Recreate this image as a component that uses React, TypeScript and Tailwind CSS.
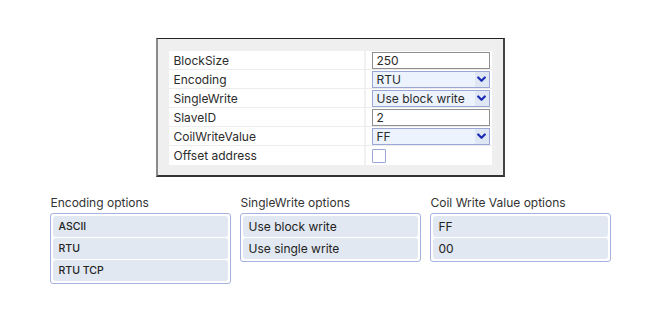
import React from 'react';

type Field =
  | { label: string; kind: 'text'; value: string }
  | { label: string; kind: 'select'; value: string }
  | { label: string; kind: 'check' };

const FIELDS: Field[] = [
  { label: 'BlockSize', kind: 'text', value: '250' },
  { label: 'Encoding', kind: 'select', value: 'RTU' },
  { label: 'SingleWrite', kind: 'select', value: 'Use block write' },
  { label: 'SlaveID', kind: 'text', value: '2' },
  { label: 'CoilWriteValue', kind: 'select', value: 'FF' },
  { label: 'Offset address', kind: 'check' },
];

const Chevron = () => (
  <svg width="9" height="7" viewBox="0 0 9 7" className="text-[#1b2bb5]">
    <path d="M1.2 1.5 L4.5 4.8 L7.8 1.5" fill="none" stroke="currentColor" strokeWidth="2.2" strokeLinecap="round" strokeLinejoin="round" />
  </svg>
);

const FieldInput: React.FC<{ field: Field }> = ({ field }) => {
  if (field.kind === 'text') {
    return (
      <div className="h-[17px] w-[118px] border border-[#8f8f8f] bg-white px-[4px] flex items-center leading-[15px]">
        {field.value}
      </div>
    );
  }
  if (field.kind === 'select') {
    return (
      <div className="h-[17px] w-[118px] border border-[#9aa6d6] bg-[#edf3fc] flex items-center leading-[15px]">
        <span className="flex-1 pl-[4px] whitespace-nowrap">{field.value}</span>
        <span className="h-full w-[14px] bg-[#dfe7f5] flex items-center justify-center">
          <Chevron />
        </span>
      </div>
    );
  }
  return <div className="h-[14px] w-[14px] border border-[#9aa6d6] bg-white rounded-[1px]" />;
};

const OptionBox: React.FC<{ title: string; items: string[]; small?: boolean }> = ({ title, items, small }) => (
  <div className="w-[181px]">
    <div className="text-[12px] text-[#333] leading-none h-[16px] pl-[1px]">{title}</div>
    <div className="border border-[#a6b2df] rounded-[3px] p-[2px] flex flex-col gap-[1px] bg-white">
      {items.map((it) => (
        <div
          key={it}
          className={`h-[21px] rounded-[3px] bg-[#e1e8f1] flex items-center pl-[6px] text-[#222] ${
            small ? 'text-[10.5px] font-medium' : 'text-[12px]'
          }`}
        >
          {it}
        </div>
      ))}
    </div>
  </div>
);

export default function App() {
  return (
    <div className="w-[660px] h-[322px] bg-white text-[#2b2b2b]" style={{ fontFamily: 'Inter, "Liberation Sans", sans-serif' }}>
      <div className="pt-[38px] flex justify-center">
        <div className="w-[349px] bg-[#efefef] border-t border-t-[#222] border-l-2 border-l-[#8a8a8a] border-r-2 border-r-[#444] border-b-2 border-b-[#333] px-[11px] pt-[12px] pb-[10px]">
          <div className="bg-white">
            {FIELDS.map((f, i) => (
              <div
                key={f.label}
                className={`flex h-[19px] text-[12px] ${i < FIELDS.length - 1 ? 'border-b border-[#ececec]' : ''}`}
              >
                <div className="w-[197px] pl-[5px] flex items-center border-r-2 border-[#f1f1f1] leading-[15px]">
                  {f.label}
                </div>
                <div className="flex-1 pl-[6px] flex items-center">
                  <FieldInput field={f} />
                </div>
              </div>
            ))}
          </div>
        </div>
      </div>
      <div className="mt-[20px] flex justify-center gap-[9px] items-start">
        <OptionBox title="Encoding options" items={['ASCII', 'RTU', 'RTU TCP']} small />
        <OptionBox title="SingleWrite options" items={['Use block write', 'Use single write']} />
        <OptionBox title="Coil Write Value options" items={['FF', '00']} />
      </div>
    </div>
  );
}
